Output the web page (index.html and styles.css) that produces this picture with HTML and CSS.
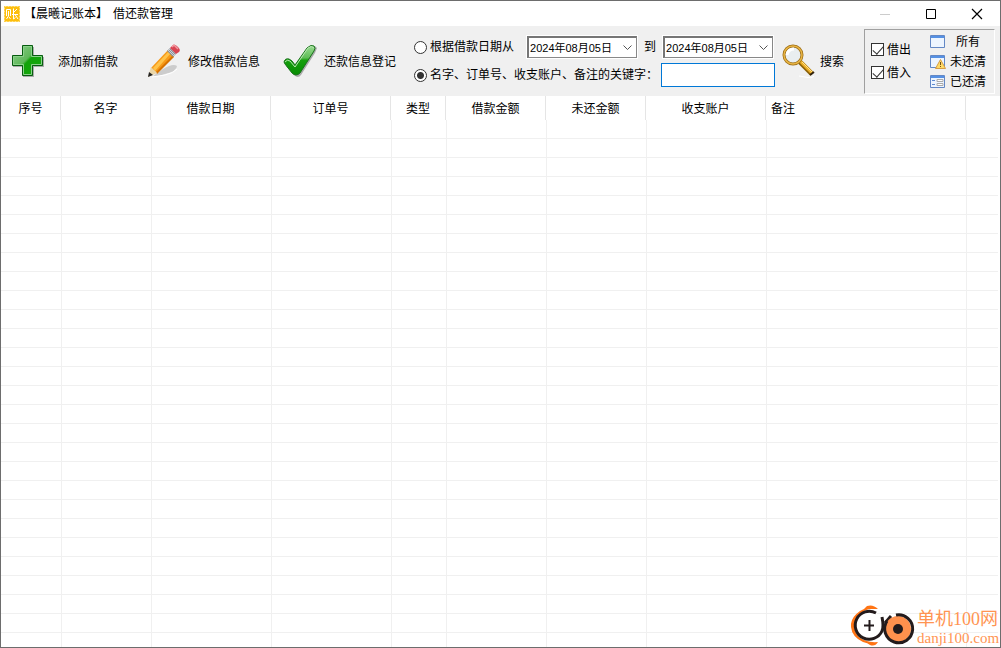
FILE: index.html
```html
<!DOCTYPE html>
<html lang="zh-CN">
<head>
<meta charset="utf-8">
<title>【晨曦记账本】 借还款管理</title>
<link rel="stylesheet" href="styles.css">
</head>
<body>
<main class="window">
  <header class="titlebar">
    <svg class="app-icon" width="16" height="16" viewBox="0 0 16 16"><rect width="16" height="16" fill="#fdbe0c"/><path d="M.5 .5H15.500V15.500H.5Z" fill="none" stroke="#ffe28a" stroke-dasharray="2 1"/><path d="M2.500 10V3.500H6.500V10M4.500 5V10L2.500 13M5 11L6.500 13M9.500 2.500V13L11.500 11.500M8 8.500H14M13 3L10 6M11 8.500L14 13" fill="none" stroke="#fff"/></svg>
    <h1 class="title">【晨曦记账本】<span>借还款管理</span></h1>
    <div class="controls">
      <button class="control" aria-label="最小化" disabled><svg width="12" height="12"><path d="M1 6.500H11" stroke="#ccc"/></svg></button>
      <button class="control" aria-label="最大化"><svg width="12" height="12"><path d="M1.500 1.500H10.500V10.500H1.500Z" fill="none" stroke="#000"/></svg></button>
      <button class="control" aria-label="关闭"><svg width="12" height="12"><path d="M1 1L11 11M11 1L1 11" stroke="#000" stroke-width="1.200"/></svg></button>
    </div>
  </header>

  <form class="toolbar">
    <button type="button" class="action add">
      <svg width="34" height="34" viewBox="0 0 34 34"><defs><linearGradient id="plus" x1="0" y1="0" x2="1" y2="1"><stop offset="0" stop-color="#8fcf8f"/><stop offset=".46" stop-color="#5fb85a"/><stop offset=".52" stop-color="#12a30a"/><stop offset="1" stop-color="#14a80a"/></linearGradient></defs><path d="M12 3H23V13H33V23H23V33H12V23H2V13H12Z" fill="#aaa"/><path d="M11.500 1.500H21.500V11.500H31.500V21.500H21.500V31.500H11.500V21.500H1.500V11.500H11.500Z" fill="url(#plus)" stroke="#075c10"/><path d="M12.500 2.500H20.500V12.500H30.500V20.500H20.500V30.500H12.500V20.500H2.500V12.500H12.500Z" fill="none" stroke="#8bd28a"/></svg>
      <span>添加新借款</span>
    </button>
    <button type="button" class="action edit">
      <svg width="34" height="34" viewBox="0 0 34 34"><path d="M6 32L16 25Q26 19 30 22Q30 27 18 30Q10 33 6 32Z" fill="#ccc"/><path d="M5 33L18 31Q27 29 30 25" fill="none" stroke="#fff"/><path d="M4 24L21 6L27 12L10 29Z" fill="#f79a18"/><path d="M6 24L22 7L24 9L8 27Z" fill="#ffc34a"/><path d="M9 28L26 11L27 13L10 30Z" fill="#d87300"/><path d="M4 23L10 29L1 33Z" fill="#ead6a8"/><path d="M2 28L6 31L1 33Z" fill="#222"/><path d="M20 7L23 4L29 10L26 13Z" fill="#8c929a"/><path d="M21 6L27 12M22 5L28 11" stroke="#ccd1d5"/><path d="M23 4L26 1Q28 0 31 3Q34 6 32 8L29 10Z" fill="#d94452"/><path d="M25 3L27 1L31 5" fill="none" stroke="#f19aa0" stroke-width="1.500"/></svg>
      <span>修改借款信息</span>
    </button>
    <button type="button" class="action repay">
      <svg width="34" height="34" viewBox="0 0 34 34"><defs><linearGradient id="check" x1="0" y1="0" x2="0" y2="1"><stop offset="0" stop-color="#9bdc93"/><stop offset=".42" stop-color="#60bd58"/><stop offset=".5" stop-color="#15a00c"/><stop offset="1" stop-color="#078c02"/></linearGradient></defs><path d="M3 18Q5 15 9 18L14 24L27 4Q31 0 34 4L32 9L18 31Q15 35 11 31L3 22Z" fill="#aaa"/><path d="M1 18Q2 14 6 15Q9 16 12 21L24 4Q28 0 31 2Q33 4 31 7L17 29Q13 33 9 29L2 20Z" fill="url(#check)" stroke="#19731b"/><path d="M2 18Q4 15 7 17L12 23L25 4Q29 1 31 4" fill="none" stroke="#b6e6b0"/></svg>
      <span>还款信息登记</span>
    </button>

    <div class="filters">
      <div class="line dates">
        <label class="choice"><input type="radio" name="mode"><span>根据借款日期从</span></label>
        <select class="date from" aria-label="开始日期"><option>2024年08月05日</option></select>
        <label class="to" for="end">到</label>
        <select class="date" id="end"><option>2024年08月05日</option></select>
      </div>
      <div class="line">
        <label class="choice"><input type="radio" name="mode" checked><span>名字、订单号、收支账户、备注的关键字：</span></label>
        <input class="keyword" type="text" aria-label="关键字">
      </div>
    </div>

    <button type="submit" class="action search">
      <svg width="34" height="34" viewBox="0 0 34 34"><path d="M17 32L29 34L32 32" stroke="#fff" fill="none"/><path d="M18 18L30 30" stroke="#8c6208" stroke-width="5"/><path d="M18 17L30 29" stroke="#eeb12a" stroke-width="3"/><path d="M20 18L30 28" stroke="#ffe08a"/><path d="M28 31L32 28" stroke="#32230e" stroke-width="2"/><circle cx="11" cy="11" r="9" fill="#e9eef0" stroke="#9b6d17" stroke-width="3"/><circle cx="11" cy="11" r="9" fill="none" stroke="#e8b443" stroke-width="1.500"/><path d="M5 11Q6 5 12 5" fill="none" stroke="#fff" stroke-width="3"/></svg>
      <span>搜索</span>
    </button>

    <div class="panel">
      <div class="checks">
        <label class="choice"><input type="checkbox" checked><span>借出</span></label>
        <label class="choice"><input type="checkbox" checked><span>借入</span></label>
      </div>
      <div class="states">
        <button type="button" class="state"><svg width="16" height="16" viewBox="0 0 16 16"><path d="M.5 1.500H14.500V13.500H.5Z" fill="#edf5ff" stroke="#6388c5"/><path d="M1 2H14V4H1Z" fill="#5590e3"/></svg><span>所有</span></button>
        <button type="button" class="state"><svg width="16" height="16" viewBox="0 0 16 16"><path d="M.5 1.500H14.500V13.500H.5Z" fill="#edf5ff" stroke="#6388c5"/><path d="M1 2H14V4H1Z" fill="#5590e3"/><path d="M10.500 5.500L15.500 14.500H5.500Z" fill="#ffda65" stroke="#d59d46"/><path d="M10.500 8V11M10.500 12V13" stroke="#765014"/></svg><span>未还清</span></button>
        <button type="button" class="state"><svg width="16" height="16" viewBox="0 0 16 16"><path d="M.5 1.500H14.500V13.500H.5Z" fill="#edf5ff" stroke="#6388c5"/><path d="M1 2H14V4H1Z" fill="#5590e3"/><path d="M2 6.500H5M2 10.500H5" stroke="#5d8ad0"/><path d="M7 5.500H13V7.500H7ZM7 9.500H13V11.500H7Z" fill="#fff" stroke="#aaa"/></svg><span>已还清</span></button>
      </div>
    </div>
  </form>

  <section class="grid">
    <table>
      <colgroup><col class="c60"><col class="c90"><col class="c120"><col class="c120"><col class="c55"><col class="c100"><col class="c100"><col class="c120"><col class="c200"><col></colgroup>
      <thead><tr><th>序号</th><th>名字</th><th>借款日期</th><th>订单号</th><th>类型</th><th>借款金额</th><th>未还金额</th><th>收支账户</th><th class="note">备注</th><th></th></tr></thead>
      <tbody id="rows"></tbody>
    </table>
  </section>

  <aside class="brand">
    <svg width="64" height="42" viewBox="0 0 64 42"><path d="M27 4Q22 -1 16 1Q14 4 9 6Q-1 13 0 22Q1 32 12 37Q17 38 19 40Q24 42 27 37Q15 38 8 32Q2 26 4 17Q7 7 18 4Z" fill="#ff7414"/><path d="M25 8A14 14 0 1 0 31 26Q33 22 31 12" fill="#fff" stroke="#231b1c" stroke-width="3"/><path d="M13 20.500H23M18.500 15V26" stroke="#231b1c" stroke-width="2"/><path d="M40 11L34 18" stroke="#231b1c" stroke-width="3"/><circle cx="47" cy="24" r="13" fill="#ff914d"/><path d="M45 10A14 14 0 1 1 36 16" fill="none" stroke="#231b1c" stroke-width="3"/><circle cx="47" cy="24" r="5" fill="#231b1c"/></svg>
    <div class="brand-text"><span class="brand-name">单机100网</span><span class="brand-url">danji100.com</span></div>
  </aside>
</main>
<script src="grid.js"></script>
</body>
</html>
```
FILE: styles.css
```css
* { box-sizing: border-box; }
body { margin: 0; font: 12px/16px "Liberation Sans", "Noto Sans CJK SC", sans-serif; color: #000; }
button, input, select { font: inherit; color: inherit; margin: 0; }
button { border: 0; padding: 0; background: none; white-space: nowrap; }
svg { display: block; flex: none; }
.window { position: relative; display: flex; flex-direction: column; height: 100vh; border: 1px solid #6d6d6d; background: #fff; overflow: hidden; }
.titlebar { display: flex; align-items: center; height: 25px; flex: none; padding-left: 3px; }
.title { display: flex; gap: 5px; margin: 0 auto 0 4px; font: inherit; white-space: nowrap; }
.controls { display: flex; }
.control { width: 46px; height: 25px; display: flex; align-items: center; justify-content: center; }
.toolbar { display: flex; align-items: center; height: 70px; flex: none; background: #f0f0f0; padding-right: 5px; }
.action { display: flex; align-items: center; flex: none; }
.action span { padding-top: 2px; }
.add { gap: 13px; margin-left: 10px; }
.edit { gap: 7px; margin-left: 29px; }
.repay { gap: 7px; margin-left: 23px; }
.search { gap: 4px; margin-left: 7px; }
.filters { display: flex; flex-direction: column; gap: 4px; width: 361px; flex: none; margin-left: 18px; }
.line { display: flex; align-items: center; height: 24px; }
.choice { display: flex; align-items: center; gap: 3px; white-space: nowrap; }
.choice input { appearance: none; position: relative; flex: none; width: 13px; height: 13px; border: 1px solid #333; background: #fff; }
.choice input[type="radio"] { border-radius: 50%; }
.choice input[type="radio"]:checked { background: radial-gradient(circle, #333 3px, #fff 4px); }
.choice input[type="checkbox"]:checked::after { content: ""; position: absolute; left: 3px; top: 0; width: 5px; height: 9px; border: solid #333; border-width: 0 1px 1px 0; transform: rotate(42deg); }
.date { appearance: none; width: 110px; height: 22px; border: 2px solid #767676; border-right: 1px solid #888; border-bottom: 1px solid #888; outline: 1px solid #fff; padding: 0 0 0 1px; font-size: 11px; background: #fff url("data:image/svg+xml,%3Csvg xmlns='http://www.w3.org/2000/svg' width='9' height='6'%3E%3Cpath d='M.5 .5L4.500 4.500L8.500 .5' fill='none' stroke='%23555'/%3E%3C/svg%3E") right 4px center / 9px 6px no-repeat; }
.from { margin-left: auto; }
.to { margin: 0 7px; }
.dates { padding-right: 2px; }
.keyword { width: 114px; height: 24px; margin-left: auto; border: 1px solid #0078d7; background: #fff; outline: 0; }
.panel { display: flex; height: 65px; width: 131px; margin-left: auto; padding-left: 6px; border: 1px solid #a0a0a0; border-right-color: #fff; border-bottom-color: #fff; }
.checks { display: flex; flex-direction: column; justify-content: center; gap: 7px; width: 59px; }
.states { display: flex; flex-direction: column; padding-top: 2px; flex: 1; }
.state { display: flex; align-items: center; height: 21px; }
.state span { flex: 1; padding-right: 4px; text-align: center; }
.grid { flex: 1; min-height: 0; overflow: hidden; margin-right: 2px; }
table { width: 100%; table-layout: fixed; border-collapse: separate; border-spacing: 0; }
th { height: 24px; padding: 2px 0 0; border-right: 1px solid #e5e5e5; font-weight: normal; }
th:last-child { border: 0; }
.note { text-align: left; padding-left: 5px; }
td { height: 19px; padding: 0; border-bottom: 1px solid #f0f0f0; border-left: 1px solid #f0f0f0; }
td:first-child { border-left: 0; }
.c55 { width: 55px; }
.c60 { width: 60px; }
.c90 { width: 90px; }
.c100 { width: 100px; }
.c120 { width: 120px; }
.c200 { width: 200px; }
.brand { position: absolute; right: 1px; bottom: 0; display: flex; align-items: flex-end; gap: 2px; color: #ff9452; }
.brand-text { display: flex; flex-direction: column; width: 82px; white-space: nowrap; }
.brand-name { font: 18px/20px "Liberation Serif", "Noto Sans CJK SC", serif; }
.brand-url { font: 15px/18px "Liberation Serif", serif; }
```
FILE: grid.js
```js
const body = document.getElementById("rows");
for (let row = 0; row < 60; row += 1) {
  const line = body.insertRow();
  for (let column = 0; column < 10; column += 1) line.insertCell();
}
```
